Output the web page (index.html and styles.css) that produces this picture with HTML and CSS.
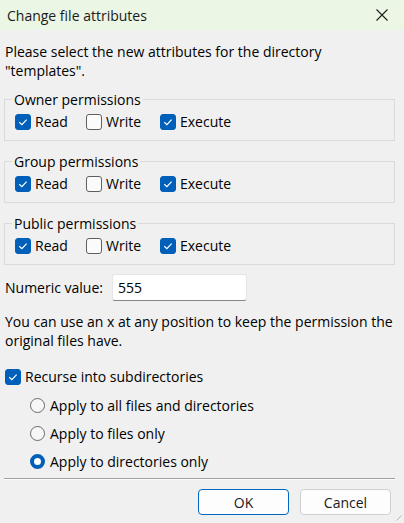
FILE: index.html
```html
<!DOCTYPE html>
<html>
<head>
<meta charset="utf-8">
<title>Change file attributes</title>
<link rel="stylesheet" href="styles.css">
</head>
<body>
<div class="window">
  <div class="titlebar">
    <span class="title">Change file attributes</span>
    <svg class="close" width="12" height="12" viewBox="0 0 12 12"><path d="M0.5 0.5L11.5 11.5M11.5 0.5L0.5 11.5" stroke="#1c1c1c" stroke-width="1.1" fill="none"/></svg>
  </div>
  <div class="content">
    <p class="intro">Please select the new attributes for the directory<br>"templates".</p>

    <fieldset class="group">
      <legend>Owner permissions</legend>
      <div class="perms">
        <label class="check"><span class="box on"><svg viewBox="0 0 16 16"><path d="M4.3 8.3L6.9 10.7L11.6 5.6"/></svg></span>Read</label>
        <label class="check"><span class="box"></span>Write</label>
        <label class="check"><span class="box on"><svg viewBox="0 0 16 16"><path d="M4.3 8.3L6.9 10.7L11.6 5.6"/></svg></span>Execute</label>
      </div>
    </fieldset>

    <fieldset class="group">
      <legend>Group permissions</legend>
      <div class="perms">
        <label class="check"><span class="box on"><svg viewBox="0 0 16 16"><path d="M4.3 8.3L6.9 10.7L11.6 5.6"/></svg></span>Read</label>
        <label class="check"><span class="box"></span>Write</label>
        <label class="check"><span class="box on"><svg viewBox="0 0 16 16"><path d="M4.3 8.3L6.9 10.7L11.6 5.6"/></svg></span>Execute</label>
      </div>
    </fieldset>

    <fieldset class="group">
      <legend>Public permissions</legend>
      <div class="perms">
        <label class="check"><span class="box on"><svg viewBox="0 0 16 16"><path d="M4.3 8.3L6.9 10.7L11.6 5.6"/></svg></span>Read</label>
        <label class="check"><span class="box"></span>Write</label>
        <label class="check"><span class="box on"><svg viewBox="0 0 16 16"><path d="M4.3 8.3L6.9 10.7L11.6 5.6"/></svg></span>Execute</label>
      </div>
    </fieldset>

    <div class="numeric">
      <span class="numlabel">Numeric value:</span>
      <div class="input">555</div>
    </div>

    <p class="hint">You can use an x at any position to keep the permission the<br>original files have.</p>

    <label class="check recurse"><span class="box on"><svg viewBox="0 0 16 16"><path d="M4.3 8.3L6.9 10.7L11.6 5.6"/></svg></span>Recurse into subdirectories</label>

    <div class="radios">
      <label class="radio"><span class="dot"></span>Apply to all files and directories</label>
      <label class="radio"><span class="dot"></span>Apply to files only</label>
      <label class="radio"><span class="dot sel"></span>Apply to directories only</label>
    </div>

    <div class="separator"></div>

    <div class="buttons">
      <button class="btn default">OK</button>
      <button class="btn">Cancel</button>
    </div>
  </div>
  <svg class="grip" width="6" height="6" viewBox="0 0 6 6"><path d="M5.5 0.5L0.5 5.5" stroke="#b5b5b5" stroke-width="1"/></svg>
</div>
</body>
</html>
```

FILE: styles.css
```css
* {
  box-sizing: border-box;
}

html, body {
  margin: 0;
  padding: 0;
}

body {
  background: #f0f0f0;
  font-family: "Open Sans", "Noto Sans", "Liberation Sans", sans-serif;
  font-size: 14px;
  color: #000;
}

.window {
  position: relative;
  width: 404px;
  height: 523px;
  display: flex;
  flex-direction: column;
  background: #f0f0f0;
  overflow: hidden;
}

.titlebar {
  height: 30px;
  flex: none;
  background: #ebf6e4;
  display: flex;
  align-items: center;
  justify-content: space-between;
  padding: 0 16px 0 7px;
}

.title {
  font-size: 14px;
  color: #1a1a1a;
}

.close {
  display: block;
}

.content {
  display: flex;
  flex-direction: column;
  padding: 0 9px 0 4px;
}

.intro {
  margin: 12px 0 0 1px;
  line-height: 19px;
}

.group {
  margin: 10px 0 0 0;
  border: 1px solid #dadada;
  padding: 2px 0 7px 10px;
  min-width: 0;
}

.group + .group {
  margin-top: 11px;
}

.group legend {
  padding: 0 2px;
  margin-left: -3px;
  line-height: 19px;
}

.perms {
  display: grid;
  grid-template-columns: 71px 74px auto;
  height: 22px;
}

.check {
  display: flex;
  align-items: center;
  height: 22px;
  line-height: 22px;
  white-space: nowrap;
}

.box {
  width: 16px;
  height: 16px;
  flex: none;
  margin-right: 4px;
  border: 1px solid #5f5f5f;
  border-radius: 3px;
  background: #fbfbfb;
  display: flex;
  align-items: center;
  justify-content: center;
}

.box.on {
  background: #005fb8;
  border-color: #005fb8;
}

.box svg {
  width: 16px;
  height: 16px;
  flex: none;
}

.box svg path {
  fill: none;
  stroke: #fff;
  stroke-width: 1.2;
}

.numeric {
  display: flex;
  align-items: center;
  margin-top: 9px;
  height: 27px;
  padding-left: 1px;
}

.numlabel {
  width: 107px;
  flex: none;
}

.input {
  width: 135px;
  height: 27px;
  background: #fff;
  border: 1px solid #e5e5e5;
  border-bottom-color: #868686;
  border-radius: 3px;
  padding-left: 5px;
  line-height: 25px;
}

.hint {
  margin: 11px 0 0 1px;
  line-height: 19px;
}

.recurse {
  margin-top: 16px;
  padding-left: 1px;
}

.radios {
  display: flex;
  flex-direction: column;
  gap: 6px;
  margin-top: 6px;
  padding-left: 26px;
}

.radio {
  display: flex;
  align-items: center;
  height: 22px;
  white-space: nowrap;
}

.dot {
  width: 15px;
  height: 15px;
  flex: none;
  border: 1px solid #6a6a6a;
  border-radius: 50%;
  background: #f7f7f7;
  margin-right: 5px;
}

.dot.sel {
  border: 4px solid #005fb8;
  background: #fff;
}

.separator {
  margin-top: 6px;
  height: 2px;
  border-top: 1px solid #a0a0a0;
  border-bottom: 1px solid #fdfdfd;
}

.buttons {
  display: flex;
  justify-content: flex-end;
  gap: 11px;
  margin-top: 9px;
  padding-right: 4px;
}

.btn {
  width: 91px;
  height: 26px;
  font-family: inherit;
  font-size: 14px;
  color: #1a1a1a;
  background: #fdfdfd;
  border: 1px solid #d0d0d0;
  border-radius: 4px;
  padding: 0;
}

.btn.default {
  border-color: #0067c0;
}

.grip {
  position: absolute;
  right: 2px;
  bottom: 2px;
}
```
